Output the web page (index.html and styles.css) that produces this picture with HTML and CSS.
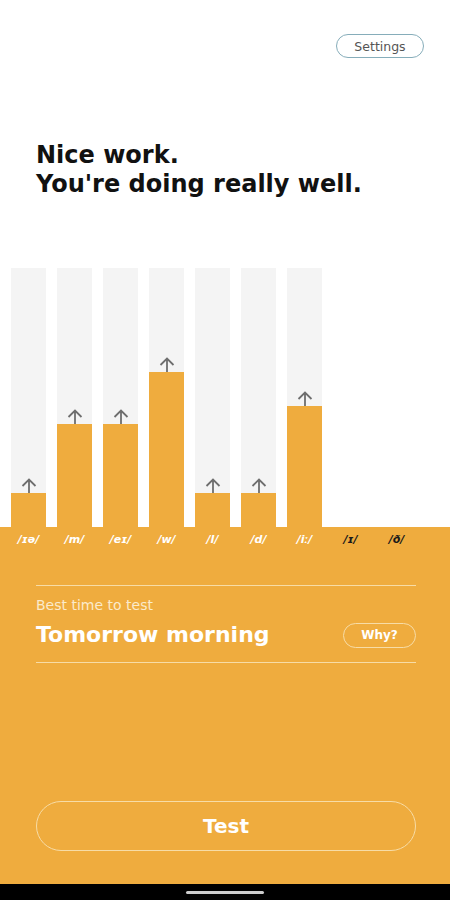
FILE: index.html
```html
<!DOCTYPE html>
<html lang="en">
<head>
    <meta charset="UTF-8">
    <meta name="viewport" content="width=device-width, initial-scale=1.0">
    <title>Progress</title>
    <link rel="stylesheet" href="styles.css">
</head>
<body>
    <div class="screen">
        <div class="top">
            <div class="settings-row">
                <button class="settings-btn">Settings</button>
            </div>

            <h1 class="headline">Nice work.<br>You're doing really well.</h1>

            <div class="chart">
                <div class="col">
                    <svg class="arrow" viewBox="0 0 16 15"><path d="M8 15V2M1.5 8L8 1.5L14.5 8"/></svg>
                    <div class="bar" style="height: 34px"></div>
                </div>
                <div class="col">
                    <svg class="arrow" viewBox="0 0 16 15"><path d="M8 15V2M1.5 8L8 1.5L14.5 8"/></svg>
                    <div class="bar" style="height: 103px"></div>
                </div>
                <div class="col">
                    <svg class="arrow" viewBox="0 0 16 15"><path d="M8 15V2M1.5 8L8 1.5L14.5 8"/></svg>
                    <div class="bar" style="height: 103px"></div>
                </div>
                <div class="col">
                    <svg class="arrow" viewBox="0 0 16 15"><path d="M8 15V2M1.5 8L8 1.5L14.5 8"/></svg>
                    <div class="bar" style="height: 155px"></div>
                </div>
                <div class="col">
                    <svg class="arrow" viewBox="0 0 16 15"><path d="M8 15V2M1.5 8L8 1.5L14.5 8"/></svg>
                    <div class="bar" style="height: 34px"></div>
                </div>
                <div class="col">
                    <svg class="arrow" viewBox="0 0 16 15"><path d="M8 15V2M1.5 8L8 1.5L14.5 8"/></svg>
                    <div class="bar" style="height: 34px"></div>
                </div>
                <div class="col">
                    <svg class="arrow" viewBox="0 0 16 15"><path d="M8 15V2M1.5 8L8 1.5L14.5 8"/></svg>
                    <div class="bar" style="height: 121px"></div>
                </div>
            </div>
        </div>

        <div class="bottom">
            <div class="labels">
                <span>/ɪə/</span>
                <span>/m/</span>
                <span>/eɪ/</span>
                <span>/w/</span>
                <span>/l/</span>
                <span>/d/</span>
                <span>/iː/</span>
                <span class="untested">/ɪ/</span>
                <span class="untested">/ð/</span>
            </div>

            <div class="best-time">
                <div class="best-label">Best time to test</div>
                <div class="best-row">
                    <span class="best-value">Tomorrow morning</span>
                    <button class="why-btn">Why?</button>
                </div>
            </div>

            <div class="spacer"></div>

            <button class="test-btn">Test</button>
        </div>

        <div class="nav-bar">
            <div class="nav-handle"></div>
        </div>
    </div>
</body>
</html>
```

FILE: styles.css
```css
body {
    margin: 0;
    background-color: white;
    font-family: 'DejaVu Sans', 'Open Sans', sans-serif;
}

.screen {
    width: 450px;
    height: 900px;
    display: flex;
    flex-direction: column;
}

.top {
    display: flex;
    flex-direction: column;
}

.settings-row {
    display: flex;
    justify-content: flex-end;
    padding: 34px 26px 0 0;
}

.settings-btn {
    width: 88px;
    height: 24px;
    border: 1.5px solid #86adba;
    border-radius: 12px;
    background: white;
    color: #555;
    font-family: inherit;
    font-size: 12.5px;
    padding: 0;
}

.headline {
    margin: 83px 0 0 36px;
    font-size: 24px;
    line-height: 29px;
    font-weight: 700;
    color: #111;
}

.chart {
    margin-top: 69px;
    height: 259px;
    display: flex;
    gap: 11px;
    padding-left: 11px;
}

.col {
    width: 35px;
    background-color: #f4f4f4;
    display: flex;
    flex-direction: column;
    justify-content: flex-end;
    align-items: center;
}

.arrow {
    width: 16px;
    height: 15px;
    fill: none;
    stroke: #6e6e6e;
    stroke-width: 1.8;
}

.bar {
    align-self: stretch;
    background-color: #efac3e;
}

.bottom {
    flex: 1;
    background-color: #efac3e;
    display: flex;
    flex-direction: column;
    padding-bottom: 33px;
}

.labels {
    display: flex;
    gap: 11px;
    padding-left: 11px;
    height: 24px;
    align-items: center;
}

.labels span {
    width: 35px;
    text-align: center;
    color: white;
    font-size: 11px;
    font-weight: 700;
    font-style: italic;
}

.labels .untested {
    color: #1a1a1a;
}

.best-time {
    margin: 34px 34px 0 36px;
    border-top: 1.5px solid #f7dca6;
    border-bottom: 1.5px solid #f7dca6;
    padding: 10px 0 11px;
}

.best-label {
    color: #fbeacb;
    font-size: 14px;
    line-height: 19px;
}

.best-row {
    display: flex;
    justify-content: space-between;
    align-items: center;
    margin-top: 4px;
}

.best-value {
    color: white;
    font-size: 22px;
    font-weight: 700;
    line-height: 32px;
}

.why-btn {
    width: 73px;
    height: 25px;
    border: 1.5px solid #f7dca6;
    border-radius: 13px;
    background: transparent;
    color: white;
    font-family: inherit;
    font-size: 12px;
    font-weight: 700;
    padding: 0;
}

.spacer {
    flex: 1;
}

.test-btn {
    margin: 0 34px 0 36px;
    height: 50px;
    border: 1.5px solid #f7dca6;
    border-radius: 25px;
    background: transparent;
    color: white;
    font-family: inherit;
    font-size: 20px;
    font-weight: 700;
}

.nav-bar {
    height: 16px;
    background-color: black;
    display: flex;
    justify-content: center;
    align-items: center;
}

.nav-handle {
    width: 78px;
    height: 3px;
    border-radius: 2px;
    background-color: #ccc;
}
```
